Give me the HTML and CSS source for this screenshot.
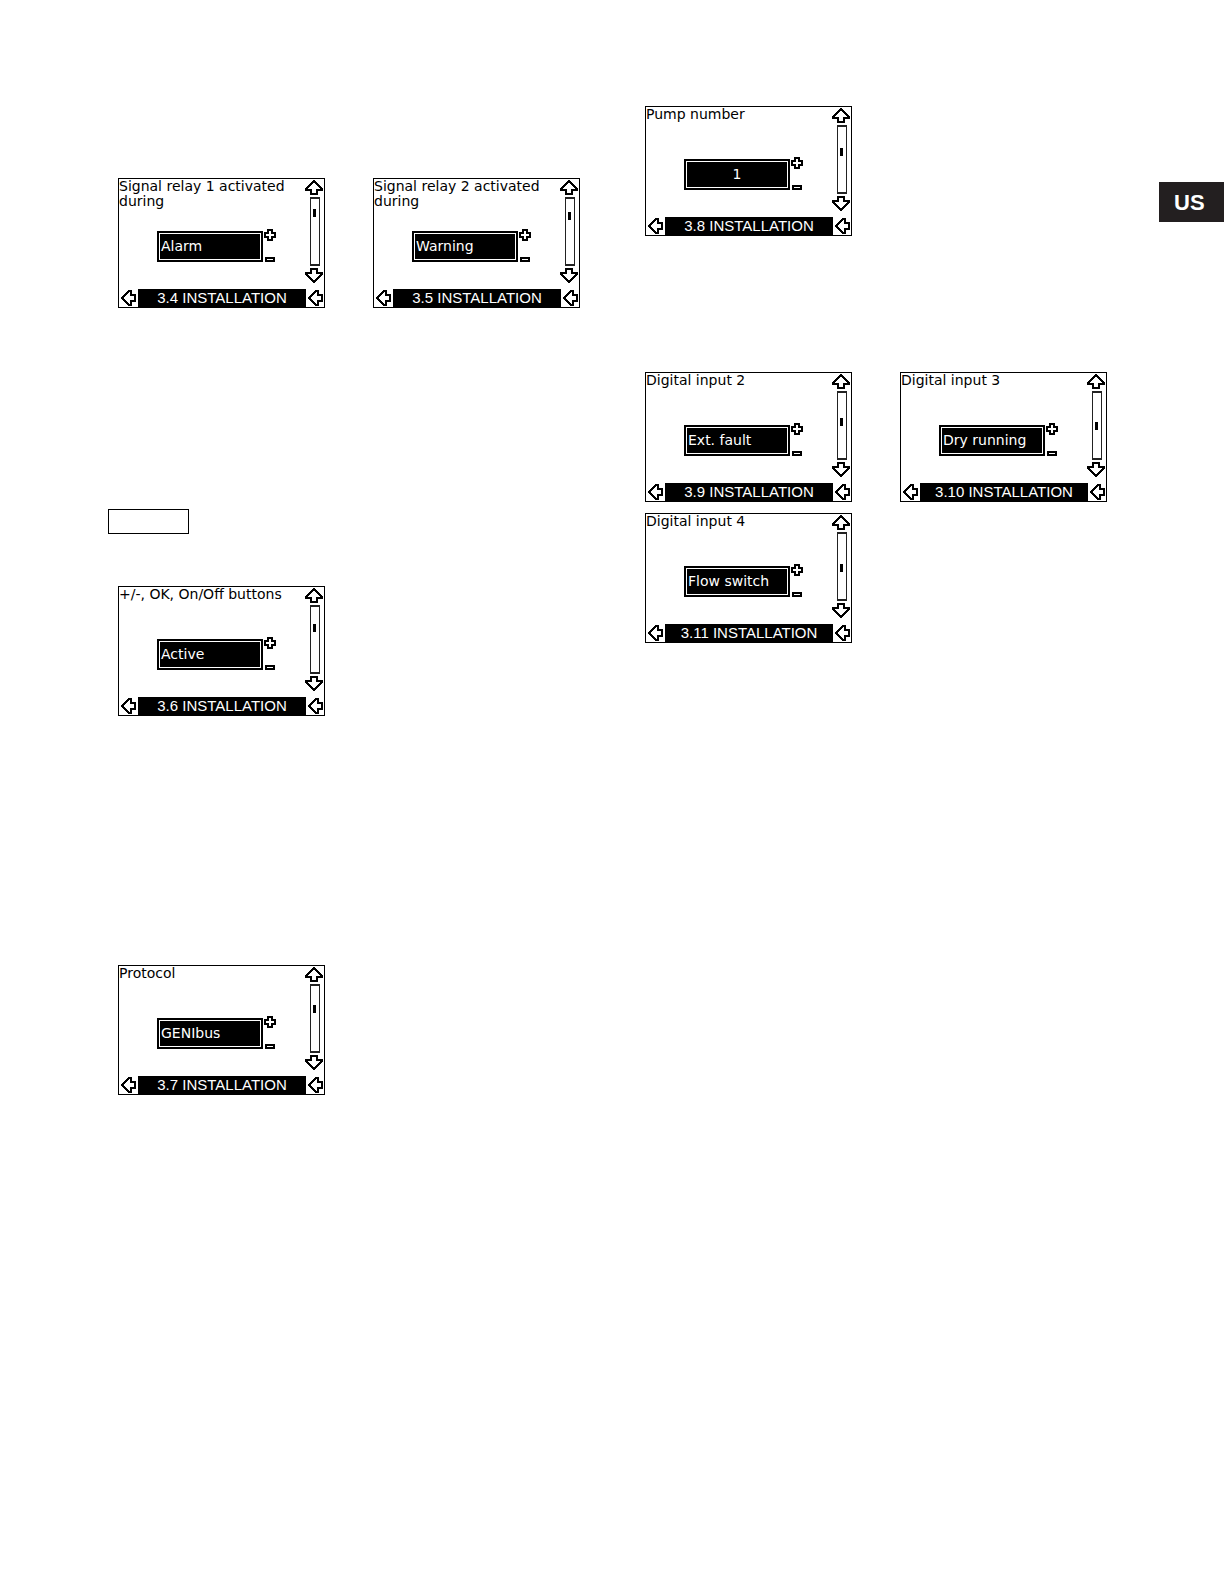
FILE: index.html
```
<!DOCTYPE html>
<html lang="en">
<head>
<meta charset="utf-8">
<title>Installation displays</title>
<link rel="stylesheet" href="styles.css">
<script src="screens.js" defer></script>
</head>
<body>
<svg class="defs" aria-hidden="true">
  <symbol id="up" viewBox="0 0 20 17"><path d="M10 2 L2 10 V11 H7 V15 H13 V11 H18 V10 Z"/></symbol>
  <symbol id="down" viewBox="0 0 20 17"><path d="M10 15 L2 7 V6 H7 V2 H13 V6 H18 V7 Z"/></symbol>
  <symbol id="left" viewBox="0 0 17 18"><path d="M2 9 L9 2 H11 V6 H15 V12 H11 V16 H9 Z"/></symbol>
  <symbol id="plus" viewBox="0 0 12 12"><path d="M4 1 H8 V4 H11 V8 H8 V11 H4 V8 H1 V4 H4 Z"/></symbol>
  <symbol id="minus" viewBox="0 0 12 5"><path d="M2 1 H10 V4 H2 Z"/></symbol>
</svg>
<main class="page">
  <div class="column column-left">
    <section class="group">
      <article class="screen" data-title="Signal relay 1 activated during" data-value="Alarm" data-menu="3.4 INSTALLATION" data-position="10"></article>
      <article class="screen" data-title="Signal relay 2 activated during" data-value="Warning" data-menu="3.5 INSTALLATION" data-position="13"></article>
    </section>
    <div class="note"></div>
    <section class="group group-buttons">
      <article class="screen" data-title="+/-, OK, On/Off buttons" data-value="Active" data-menu="3.6 INSTALLATION" data-position="17"></article>
    </section>
    <section class="group group-protocol">
      <article class="screen" data-title="Protocol" data-value="GENIbus" data-menu="3.7 INSTALLATION" data-position="19"></article>
    </section>
  </div>
  <div class="column column-right">
    <section class="group">
      <article class="screen screen-number" data-title="Pump number" data-value="1" data-menu="3.8 INSTALLATION" data-position="21"></article>
    </section>
    <section class="group group-inputs">
      <article class="screen" data-title="Digital input 2" data-value="Ext. fault" data-menu="3.9 INSTALLATION" data-position="25"></article>
      <article class="screen" data-title="Digital input 3" data-value="Dry running" data-menu="3.10 INSTALLATION" data-position="29"></article>
      <article class="screen" data-title="Digital input 4" data-value="Flow switch" data-menu="3.11 INSTALLATION" data-position="30"></article>
    </section>
  </div>
  <aside class="region">US</aside>
</main>
</body>
</html>
```

FILE: screens.js
```
const button = (icon, label) =>
  `<button class="key key-${icon}" type="button" aria-label="${label}"><svg class="icon"><use href="#${icon}"/></svg></button>`;

document.querySelectorAll(".screen").forEach((screen) => {
  const { title, value, menu, position } = screen.dataset;
  screen.innerHTML = `
    <div class="body">
      <div class="setting">
        <h2 class="title">${title}</h2>
        <div class="stepper">
          <output class="value" aria-label="${title}">${value}</output>
          <div class="steps">${button("plus", "Increase")}${button("minus", "Decrease")}</div>
        </div>
      </div>
      <div class="scroll">
        ${button("up", "Up")}
        <div class="track"><div class="thumb" style="margin-top: ${position}px"></div></div>
        ${button("down", "Down")}
      </div>
    </div>
    <footer class="menu">
      ${button("left", "Previous menu")}
      <span class="menu-name">${menu}</span>
      ${button("left", "Next menu")}
    </footer>`;
});
```

FILE: styles.css
```
* {
  box-sizing: border-box;
}

body {
  margin: 0;
  background: #fff;
  color: #000;
  font-family: "DejaVu Sans", sans-serif;
  font-size: 14px;
}

.defs {
  display: block;
  width: 0;
  height: 0;
}

.page {
  display: grid;
  grid-template-columns: 527fr 524fr 65px;
  align-items: start;
  min-height: 100vh;
  padding-left: 108px;
}

.column-left {
  padding-top: 178px;
}

.column-right {
  padding-top: 106px;
}

.group {
  display: flex;
  flex-wrap: wrap;
  gap: 11px 48px;
  padding-left: 10px;
}

.group-buttons {
  margin-top: 52px;
}

.group-protocol {
  margin-top: 249px;
}

.group-inputs {
  margin-top: 136px;
}

.note {
  width: 81px;
  height: 25px;
  margin-top: 201px;
  border: 1px solid #000;
}

.region {
  margin-top: 182px;
  padding: 2px 0 0 15px;
  background: #231f20;
  color: #fff;
  font: bold 22px/38px "Liberation Sans", sans-serif;
}

.screen {
  width: 207px;
  border: 1px solid #000;
}

.body {
  display: flex;
}

.setting {
  flex: 1;
}

.title {
  height: 30px;
  margin: 0;
  font-size: 14px;
  font-weight: normal;
  line-height: 15px;
}

.stepper {
  display: flex;
  align-items: flex-end;
  gap: 1px;
  height: 53px;
  margin-bottom: 27px;
  padding-left: 38px;
}

.value {
  width: 106px;
  padding-left: 2px;
  border: 2px solid #000;
  outline: 1px solid #fff;
  outline-offset: -3px;
  background: #000;
  color: #fff;
  line-height: 27px;
}

.screen-number .value {
  padding: 0;
  text-align: center;
}

.steps {
  display: flex;
  flex-direction: column;
  justify-content: space-between;
  height: 33px;
}

.key {
  display: block;
  padding: 0;
  border: 0;
  background: none;
}

.icon {
  display: block;
  width: 100%;
  height: 100%;
  fill: #fff;
  stroke: #000;
  stroke-width: 2px;
  shape-rendering: crispEdges;
}

.key-plus {
  width: 12px;
  height: 12px;
}

.key-minus {
  width: 12px;
  height: 5px;
}

.key-up,
.key-down {
  width: 20px;
  height: 17px;
}

.key-left {
  width: 17px;
  height: 18px;
}

.scroll {
  display: flex;
  flex-direction: column;
  align-items: center;
  gap: 1px;
  width: 20px;
}

.track {
  width: 10px;
  height: 69px;
  margin-left: 2px;
  border: 2px solid #222;
  border-width: 2px 1px;
}

.thumb {
  width: 3px;
  height: 8px;
  margin-left: 2px;
  background: #000;
}

.menu {
  display: flex;
  justify-content: space-between;
  padding-left: 1px;
}

.menu-name {
  width: 168px;
  background: #000;
  color: #fff;
  font-family: "Liberation Sans", sans-serif;
  font-size: 15px;
  line-height: 18px;
  text-align: center;
}
```
